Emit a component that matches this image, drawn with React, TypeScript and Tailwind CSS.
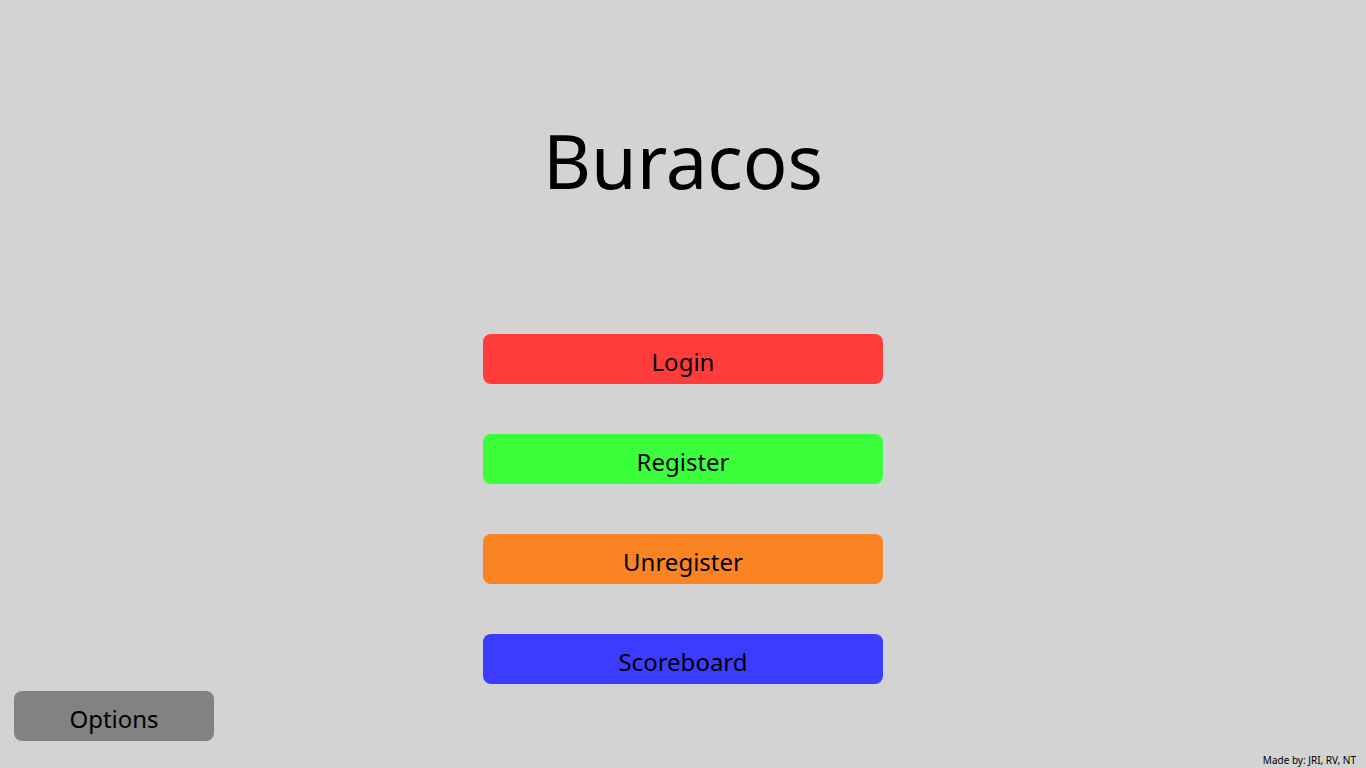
const items = [
  { label: "Login", style: "bg-[#ff3c3c]" },
  { label: "Register", style: "bg-[#3cff3c]" },
  { label: "Unregister", style: "bg-[#fa8423]" },
  { label: "Scoreboard", style: "bg-[#3c3cff]" },
];

export default function App() {
  return (
    <div className="flex min-h-screen flex-col bg-[#d3d3d3] font-['Noto_Sans','Open_Sans',sans-serif] text-black">
      <main className="flex flex-col items-center pt-28">
        <h1 className="text-[74px] leading-[98px]">Buracos</h1>
        <nav className="mt-[124px] flex w-full max-w-[400px] flex-col gap-[50px]">
          {items.map((item) => (
            <button
              key={item.label}
              type="button"
              className={`h-[50px] rounded-lg pt-1.5 text-2xl ${item.style}`}
            >
              {item.label}
            </button>
          ))}
        </nav>
      </main>
      <footer className="mt-[7px] flex items-start justify-between pr-2.5 pl-3.5">
        <button type="button" className="h-[50px] w-[200px] rounded-lg bg-[#828282] pt-1.5 text-2xl">
          Options
        </button>
        <p className="mt-[63px] text-[10px] leading-3">Made by: JRI, RV, NT</p>
      </footer>
    </div>
  );
}
